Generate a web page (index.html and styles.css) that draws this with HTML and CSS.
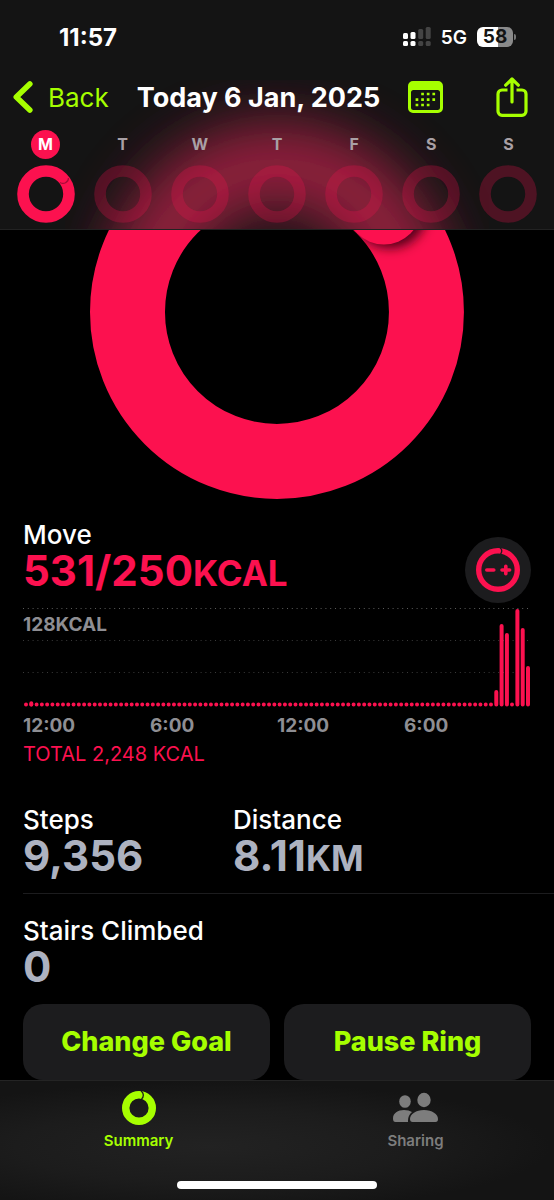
FILE: index.html
```html
<!DOCTYPE html>
<html lang="en">
<head>
<meta charset="utf-8">
<meta name="viewport" content="width=device-width, initial-scale=1">
<title>Activity</title>
<link rel="stylesheet" href="styles.css">
</head>
<body>
<svg class="defs" aria-hidden="true">
  <symbol id="ring" viewBox="0 0 58 58"><circle cx="29" cy="29" r="23" fill="none" stroke="currentColor" stroke-width="11.6"/></symbol>
</svg>
<header class="top">
  <svg class="glow" viewBox="0 0 554 229" preserveAspectRatio="xMidYMax slice" aria-hidden="true">
    <defs><filter id="soft" x="-30%" y="-30%" width="160%" height="160%"><feGaussianBlur stdDeviation="28"/></filter></defs>
    <ellipse cx="277" cy="304" rx="132" ry="140" fill="none" stroke="#a82245" stroke-width="84" opacity=".85" filter="url(#soft)"/>
  </svg>
  <div class="status">
    <time class="clock">11:57</time>
    <div class="status-right">
      <svg width="28" height="20" viewBox="0 0 28 20" aria-label="Signal">
        <g fill="#fff"><rect x="0" y="6" width="5" height="6" rx="1.500"/><rect x="0" y="14" width="5" height="5" rx="1.500"/><rect x="7.500" y="5" width="5" height="7" rx="1.500"/><rect x="7.500" y="14" width="5" height="5" rx="1.500"/></g>
        <g fill="#444"><rect x="15.200" y="2" width="5" height="10" rx="1.500"/><rect x="15.200" y="14" width="5" height="5" rx="1.500"/><rect x="22.700" y="0" width="5" height="12" rx="1.500"/><rect x="22.700" y="14" width="5" height="5" rx="1.500"/></g>
      </svg>
      <span class="net">5G</span>
      <span class="battery">58</span>
    </div>
  </div>
  <nav class="nav">
    <a class="back" href="#back">
      <svg width="20" height="32" viewBox="0 0 20 32" fill="none" stroke="currentColor" stroke-width="5.600" stroke-linecap="round" stroke-linejoin="round" aria-hidden="true"><path d="M16.800 3 3.300 16l13.500 13"/></svg>
      Back</a>
    <h1 class="title">Today 6 Jan, 2025</h1>
    <button class="icon-btn cal" aria-label="Calendar">
      <svg width="35" height="32" viewBox="0 0 35 32">
        <path fill="currentColor" fill-rule="evenodd" d="M5 0h25a5 5 0 0 1 5 5v22a5 5 0 0 1-5 5H5a5 5 0 0 1-5-5V5a5 5 0 0 1 5-5ZM5.500 9A2.500 2.500 0 0 0 3 11.500V26.500A2.500 2.500 0 0 0 5.500 29h24a2.500 2.500 0 0 0 2.500-2.500V11.500A2.500 2.500 0 0 0 29.500 9Z"/>
        <g stroke="currentColor" stroke-width="2.700" stroke-dasharray="2.700 2.900"><path d="M13.200 13h14.500"/><path d="M7.600 18.600h20.200"/><path d="M7.600 24h14"/></g>
      </svg>
    </button>
    <button class="icon-btn share" aria-label="Share">
      <svg width="32" height="40" viewBox="0 0 32 40" fill="none" stroke="currentColor" stroke-width="3.200" stroke-linecap="round" stroke-linejoin="round"><path stroke-linecap="butt" d="M11.500 13H6a4 4 0 0 0-4 4v17.300a4 4 0 0 0 4 4h20a4 4 0 0 0 4-4V17a4 4 0 0 0-4-4h-5.500"/><path d="M16 25V2.200M9.700 8.200 16 2l6.300 6.200"/></svg>
    </button>
  </nav>
  <ol class="week">
    <li class="day today"><span class="letter">M</span>
      <svg class="mini" viewBox="0 0 58 58"><use href="#ring"/><path d="M43 17.500a5.500 5.500 0 0 0 8.500-4.500" fill="none" stroke="#a80b38" stroke-width="1.300"/></svg></li>
    <li class="day"><span class="letter">T</span><svg class="mini"><use href="#ring"/></svg></li>
    <li class="day"><span class="letter">W</span><svg class="mini"><use href="#ring"/></svg></li>
    <li class="day"><span class="letter">T</span><svg class="mini"><use href="#ring"/></svg></li>
    <li class="day"><span class="letter">F</span><svg class="mini"><use href="#ring"/></svg></li>
    <li class="day"><span class="letter">S</span><svg class="mini"><use href="#ring"/></svg></li>
    <li class="day"><span class="letter">S</span><svg class="mini"><use href="#ring"/></svg></li>
  </ol>
</header>
<main class="content">
  <svg class="big-ring" viewBox="90 230 374 269" role="img" aria-label="Move ring">
    <defs>
      <filter id="shade" x="-50%" y="-50%" width="200%" height="200%"><feGaussianBlur stdDeviation="6"/></filter>
      <clipPath id="band"><path clip-rule="evenodd" d="M90 312a187 187 0 1 0 374 0a187 187 0 1 0-374 0M165 312a112 112 0 1 0 224 0a112 112 0 1 0-224 0"/></clipPath>
    </defs>
    <circle cx="277" cy="312" r="149.500" fill="none" stroke="#fc114f" stroke-width="75"/>
    <g clip-path="url(#band)"><circle cx="390" cy="211" r="37" fill="#4a0015" filter="url(#shade)"/></g>
    <circle cx="384" cy="207" r="37.500" fill="#fc114f"/>
  </svg>
  <section class="move">
    <div class="move-head">
      <div>
        <h2 class="label">Move</h2>
        <p class="value pink">531/250<span class="unit">KCAL</span></p>
      </div>
      <button class="adjust" aria-label="Adjust move goal">
        <svg width="44" height="44" viewBox="0 0 44 44" fill="none" stroke="currentColor"><circle cx="22" cy="22" r="19.300" stroke-width="5.400"/><path stroke="#1c1c1e" stroke-width="1.300" d="M24 0c2 1 2.500 4 .5 6"/><path stroke-width="3.600" stroke-linecap="round" d="M10.800 22h7M26 22h7.600M29.800 18.200v7.600"/></svg>
      </button>
    </div>
    <div class="chart">
      <span class="max">128KCAL</span>
      <svg class="plot" viewBox="0 0 508 99" role="img" aria-label="Calories by time of day">
        <g stroke="#5c5c5c" stroke-dasharray="1 3.800"><path d="M0 .5h508"/><path stroke="#3a3a3a" d="M0 32.500h508M0 64.500h508"/></g>
        <g stroke="#fc114f" stroke-linecap="round" fill="none">
          <path stroke-width="4" stroke-dasharray="0 5.284" d="M3 96.500h470M489 96.500h1"/>
          <path stroke-width="4" d="M8.300 95.300v1.200M473.300 84v12.500M478.600 18v78.500M483.900 27v69.500M494.400 3v93.500M499.700 22v74.500M505 60v36.500"/>
        </g>
      </svg>
      <div class="axis"><span>12:00</span><span>6:00</span><span>12:00</span><span>6:00</span></div>
    </div>
    <p class="total">TOTAL 2,248 KCAL</p>
  </section>
  <section class="stats">
    <div><h2 class="label">Steps</h2><p class="value">9,356</p></div>
    <div><h2 class="label">Distance</h2><p class="value">8.11<span class="unit">KM</span></p></div>
  </section>
  <section class="stats stairs">
    <div><h2 class="label">Stairs Climbed</h2><p class="value">0</p></div>
  </section>
  <div class="actions">
    <button class="action">Change Goal</button>
    <button class="action">Pause Ring</button>
  </div>
</main>
<footer class="tabs">
  <nav class="tab-row">
    <a class="tab active" href="#summary">
      <svg width="34" height="34" viewBox="0 0 34 34"><circle cx="17" cy="17" r="13.300" fill="none" stroke="currentColor" stroke-width="7.400"/><path d="M19 0c3 2 3 6 .5 8" fill="none" stroke="#1c1c1c" stroke-width="1.300"/></svg>
      Summary</a>
    <a class="tab" href="#sharing">
      <svg width="45" height="34" viewBox="0 0 45 34" fill="currentColor"><ellipse cx="12" cy="10.500" rx="5.800" ry="6.300"/><path d="M0 27.500C0 22 5 19 11 19q5 0 8 2-4 3.500-4 8.500v1.500H2.500Q0 31 0 27.500Z"/><ellipse cx="31" cy="9" rx="6.700" ry="7.200"/><path d="M17 28c0-5 6-9 14-9s14 4 14 9q0 3-2.500 3h-23Q17 31 17 28Z"/></svg>
      Sharing</a>
  </nav>
  <div class="home"></div>
</footer>
</body>
</html>
```
FILE: styles.css
```css
:root {
  --pink: #fc114f;
  --green: #a6ff00;
  --edge: 23px;
}
* { box-sizing: border-box; }
body {
  margin: 0;
  min-height: 100vh;
  display: flex;
  flex-direction: column;
  background: #000;
  color: #fff;
  font-family: Inter, "Liberation Sans", sans-serif;
}
h1, h2, p, ol { margin: 0; padding: 0; }
button { border: 0; padding: 0; font: inherit; background: none; color: inherit; cursor: pointer; }
a { color: inherit; text-decoration: none; }
svg { display: block; flex: none; }
.defs { position: absolute; width: 0; height: 0; }

.top {
  position: relative;
  overflow: hidden;
  isolation: isolate;
  background: #141414;
  border-bottom: 1px solid #222;
}
.glow { position: absolute; inset: 0; width: 100%; height: 100%; z-index: -1; }

.status {
  display: flex;
  justify-content: space-between;
  align-items: center;
  height: 74px;
  padding: 0 41px 0 59px;
}
.clock { font-size: 24px; font-weight: 700; }
.status-right { display: flex; align-items: center; gap: 10px; }
.net { font-size: 19px; font-weight: 600; }
.battery {
  position: relative;
  width: 36px;
  height: 20px;
  border-radius: 6px;
  background: linear-gradient(90deg, #fff 58%, #8a8a8a 58%);
  color: #141414;
  font-size: 19px;
  font-weight: 700;
  line-height: 20px;
  text-align: center;
}
.battery::after {
  content: "";
  position: absolute;
  left: 37px;
  top: 7px;
  width: 2px;
  height: 6px;
  border-radius: 0 2px 2px 0;
  background: #777;
}

.nav {
  display: flex;
  align-items: center;
  height: 46px;
  padding: 0 26px 0 13px;
  color: var(--green);
}
.back { display: flex; align-items: center; gap: 15px; font-size: 26px; }
.title { margin: 0 28px; color: #fff; font-size: 27px; font-weight: 700; white-space: nowrap; }
.share { margin-left: auto; }

.week {
  display: grid;
  grid-template-columns: repeat(7, 1fr);
  padding: 10px 7px 6px;
  list-style: none;
}
.day { display: flex; flex-direction: column; align-items: center; gap: 6px; color: #fc114f40; }
.letter {
  width: 29px;
  height: 29px;
  border-radius: 50%;
  color: #a9a0a5;
  font-size: 16px;
  font-weight: 700;
  line-height: 29px;
  text-align: center;
}
.mini { width: 58px; height: 58px; }
.today { color: var(--pink); }
.today .letter { background: var(--pink); color: #fff; }

.content { flex: 1; }
.big-ring { width: 67.5%; margin: 0 auto; }
.move { padding: 21px var(--edge) 0; }
.move-head { display: flex; justify-content: space-between; align-items: flex-end; }
.label { font-size: 26px; font-weight: 500; line-height: 30px; }
.value { font-size: 42px; font-weight: 700; line-height: 42px; color: #adb2c0; }
.unit { font-size: 35px; }
.value.pink { color: var(--pink); }
.adjust {
  display: grid;
  place-items: center;
  width: 66px;
  height: 66px;
  border-radius: 50%;
  background: #1c1c1e;
  color: var(--pink);
}
.move-head .adjust { margin-bottom: -9px; }
.chart { position: relative; margin-top: 14px; }
.plot { width: 100%; }
.max { position: absolute; left: 0; top: 6px; }
.max, .axis { color: #8e8e93; font-size: 19px; font-weight: 700; line-height: 22px; }
.axis { display: grid; grid-template-columns: repeat(4, 1fr); margin-top: 8px; }
.total { margin-top: 5px; color: var(--pink); font-size: 20px; line-height: 24px; }

.stats {
  display: grid;
  grid-template-columns: 210px 1fr;
  margin-left: var(--edge);
  padding: 39px 0 14px;
  border-bottom: 1px solid #1c1c1e;
}
.stairs { grid-template-columns: 1fr; padding: 22px 0 16px; border-bottom: 0; }
.actions { display: grid; grid-template-columns: 1fr 1fr; gap: 14px; padding: 0 var(--edge); }
.action {
  height: 76px;
  border-radius: 20px;
  background: #1c1c1e;
  color: var(--green);
  font-size: 27px;
  font-weight: 800;
}

.tabs {
  padding: 10px 0 11px;
  border-top: 1px solid #242424;
  background: radial-gradient(ellipse at 38% 55%, #222 0%, #1c1c1c 40%, #141414 70%);
}
.tab-row { display: grid; grid-template-columns: 1fr 1fr; }
.tab {
  display: flex;
  flex-direction: column;
  align-items: center;
  gap: 7px;
  color: #7d7d7d;
  font-size: 15px;
  font-weight: 600;
  line-height: 18px;
}
.tab.active { color: var(--green); }
.home { width: 36%; height: 8px; margin: 31px auto 0; border-radius: 4px; background: #fff; }
```
